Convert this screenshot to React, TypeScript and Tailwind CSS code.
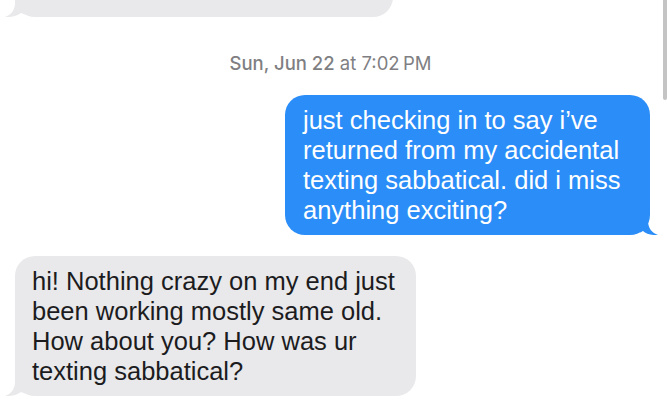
import React from 'react';

const GRAY = '#e9e9eb';
const BLUE = '#2b8df7';

const LeftTail = ({ color }: { color: string }) => (
  <svg
    className="absolute left-[-10px] bottom-0 w-[20px] h-[20px]"
    viewBox="0 0 20 20"
    fill={color}
  >
    <path d="M10 0 L10 6 C10 13 6 18 0 20 C6 20.5 12 19 16 16 L20 17.5 L20 0 Z" />
  </svg>
);

const RightTail = ({ color }: { color: string }) => (
  <svg
    className="absolute right-[-8px] bottom-0 w-[18px] h-[20px]"
    viewBox="0 0 18 20"
    fill={color}
  >
    <path d="M8 0 L8 6 C8 13 12 18 18 20 C12 20.5 6 19 3 16 L0 17.5 L0 0 Z" />
  </svg>
);

const incoming = [
  'hi! Nothing crazy on my end just',
  'been working mostly same old.',
  'How about you? How was ur',
  'texting sabbatical?',
];

const outgoing = [
  'just checking in to say i\u2019ve',
  'returned from my accidental',
  'texting sabbatical. did i miss',
  'anything exciting?',
];

export default function App() {
  return (
    <div className="relative w-full h-[405px] overflow-hidden bg-white font-['Liberation_Sans',Arial,sans-serif]">
      <div className="flex flex-col">
        {/* previous message, mostly scrolled away */}
        <div className="relative self-start ml-[15px] mt-[-43px] w-[378px] h-[60px] rounded-[20px] bg-[#e9e9eb]">
          <LeftTail color={GRAY} />
        </div>

        <div className="mt-[34px] text-center font-['Inter',sans-serif] text-[18.5px] leading-[24px] text-[#7f7f83] pr-[6px]">
          <span className="font-medium">Sun, Jun 22</span> at 7:02{'\u2009'}PM
        </div>

        <div className="relative self-end mr-[17px] mt-[20px] w-[365px] rounded-[20px] bg-[#2b8df7] px-[18px] py-[10px] text-white text-[25.5px] leading-[30px]">
          {outgoing.map((line) => (
            <div key={line} className="whitespace-nowrap">{line}</div>
          ))}
          <RightTail color={BLUE} />
        </div>

        <div className="relative self-start ml-[15px] mt-[21px] w-[401px] rounded-[20px] bg-[#e9e9eb] px-[17px] pt-[10px] pb-[10px] text-[#1c1c1e] text-[25.5px] leading-[30px]">
          {incoming.map((line) => (
            <div key={line} className="whitespace-nowrap">{line}</div>
          ))}
          <LeftTail color={GRAY} />
        </div>
      </div>

      {/* scrollbar thumb */}
      <div className="absolute right-0 top-0 w-[4px] h-[100px] rounded-b-full bg-[#c4c4c4]" />
    </div>
  );
}
